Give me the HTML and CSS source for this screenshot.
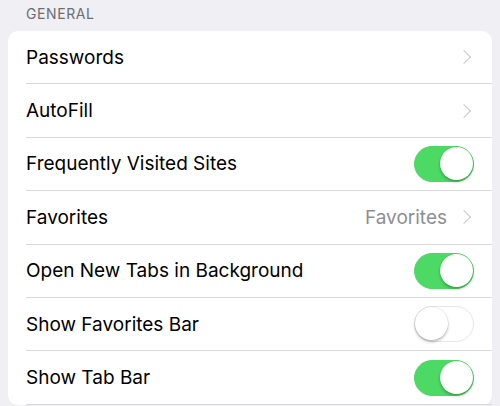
FILE: index.html
```html
<!DOCTYPE html>
<html>
<head>
<meta charset="utf-8">
<link rel="stylesheet" href="styles.css">
</head>
<body>
<div class="page">
  <div class="header">GENERAL</div>
  <div class="card">
    <div class="row"><span class="label">Passwords</span><span class="acc"><span class="chev"></span></span></div>
    <div class="row"><span class="label">AutoFill</span><span class="acc"><span class="chev"></span></span></div>
    <div class="row"><span class="label">Frequently Visited Sites</span><span class="acc"><span class="toggle on"><span class="knob"></span></span></span></div>
    <div class="row"><span class="label">Favorites</span><span class="acc"><span class="value">Favorites</span><span class="chev"></span></span></div>
    <div class="row"><span class="label">Open New Tabs in Background</span><span class="acc"><span class="toggle on"><span class="knob"></span></span></span></div>
    <div class="row"><span class="label">Show Favorites Bar</span><span class="acc"><span class="toggle"><span class="knob"></span></span></span></div>
    <div class="row"><span class="label">Show Tab Bar</span><span class="acc"><span class="toggle on"><span class="knob"></span></span></span></div>
  </div>
</div>
</body>
</html>
```
FILE: styles.css
```css
html, body {
  margin: 0;
  padding: 0;
  background: #efeff4;
  font-family: Inter, "Liberation Sans", Arial, sans-serif;
}
.page {
  width: 500px;
  height: 406px;
  overflow: hidden;
  padding: 0 8px;
  box-sizing: border-box;
}
.header {
  height: 31px;
  box-sizing: border-box;
  padding: 5px 0 0 18px;
  font-size: 14px;
  color: #6d6d72;
  letter-spacing: 0.6px;
}
.card {
  background: #fff;
  border-radius: 10px;
  padding-left: 18px;
}
.row {
  height: 53.4px;
  box-sizing: border-box;
  border-bottom: 1px solid #d9d9dd;
  display: flex;
  align-items: center;
  justify-content: space-between;
  padding-right: 18px;
}
.label {
  font-size: 19px;
  color: #000;
}
.acc {
  display: flex;
  align-items: center;
}
.value {
  font-size: 19px;
  color: #8e8e93;
  margin-right: 12px;
}
.chev {
  width: 9px;
  height: 9px;
  border-right: 1.8px solid #c7c7cc;
  border-top: 1.8px solid #c7c7cc;
  transform: rotate(45deg);
  margin-right: 5px;
}
.toggle {
  position: relative;
  width: 60px;
  height: 36px;
  border-radius: 18px;
  background: #fff;
  box-sizing: border-box;
  border: 1.5px solid #e5e5ea;
  display: block;
}
.toggle.on {
  background: #4cd964;
  border-color: #4cd964;
}
.knob {
  position: absolute;
  top: 0;
  left: 0;
  width: 33px;
  height: 33px;
  border-radius: 50%;
  background: #fff;
  box-shadow: 0 2px 3px rgba(0,0,0,0.25), 0 0 0 0.5px rgba(0,0,0,0.08);
}
.toggle.on .knob {
  left: auto;
  right: 0;
}
```
